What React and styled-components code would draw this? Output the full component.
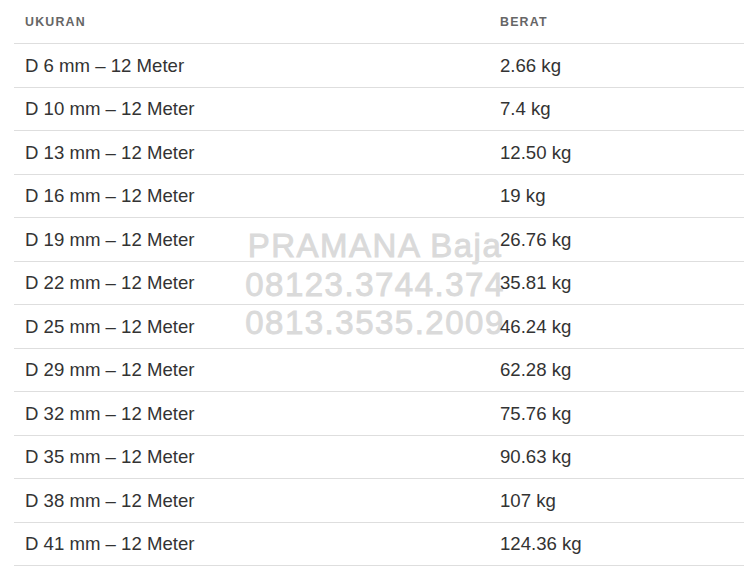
import React from "react";
import styled, { createGlobalStyle } from "styled-components";

const Global = createGlobalStyle`
  html, body { margin: 0; padding: 0; background: #fff; }
  body { font-family: "Liberation Sans", Arial, sans-serif; }
`;

const Page = styled.div`
  position: relative;
  width: 750px;
  height: 572px;
  overflow: hidden;
  background: #fff;
`;

const Table = styled.div`
  position: relative;
  z-index: 1;
  margin-left: 14px;
  width: 730px;
  display: grid;
  grid-template-columns: 475px 1fr;
`;

const HeadCell = styled.div`
  height: 44px;
  box-sizing: border-box;
  border-bottom: 1px solid #dedede;
  display: flex;
  align-items: center;
  padding: 0 11px;
  font-size: 12.4px;
  font-weight: 700;
  letter-spacing: 1.2px;
  text-transform: uppercase;
  color: #666;
`;

const Cell = styled.div`
  height: 43.5px;
  box-sizing: border-box;
  border-bottom: 1px solid #dedede;
  display: flex;
  align-items: center;
  padding: 0 11px;
  padding-top: 1px;
  font-size: 18.6px;
  color: #333;
`;

const Watermark = styled.div`
  position: absolute;
  z-index: 0;
  left: 0;
  right: 0;
  top: 227px;
  text-align: center;
  font-size: 33px;
  line-height: 38.5px;
  letter-spacing: 1.5px;
  color: #dadada;
  -webkit-text-stroke: 0.9px #dadada;
  pointer-events: none;
`;

const rows = [
  ["D 6 mm – 12 Meter", "2.66 kg"],
  ["D 10 mm – 12 Meter", "7.4 kg"],
  ["D 13 mm – 12 Meter", "12.50 kg"],
  ["D 16 mm – 12 Meter", "19 kg"],
  ["D 19 mm – 12 Meter", "26.76 kg"],
  ["D 22 mm – 12 Meter", "35.81 kg"],
  ["D 25 mm – 12 Meter", "46.24 kg"],
  ["D 29 mm – 12 Meter", "62.28 kg"],
  ["D 32 mm – 12 Meter", "75.76 kg"],
  ["D 35 mm – 12 Meter", "90.63 kg"],
  ["D 38 mm – 12 Meter", "107 kg"],
  ["D 41 mm – 12 Meter", "124.36 kg"],
];

export default function App() {
  return (
    <Page>
      <Global />
      <Watermark>
        <div>PRAMANA Baja</div>
        <div>08123.3744.374</div>
        <div>0813.3535.2009</div>
      </Watermark>
      <Table>
        <HeadCell>Ukuran</HeadCell>
        <HeadCell>Berat</HeadCell>
        {rows.map(([a, b]) => (
          <React.Fragment key={a}>
            <Cell>{a}</Cell>
            <Cell>{b}</Cell>
          </React.Fragment>
        ))}
      </Table>
    </Page>
  );
}
